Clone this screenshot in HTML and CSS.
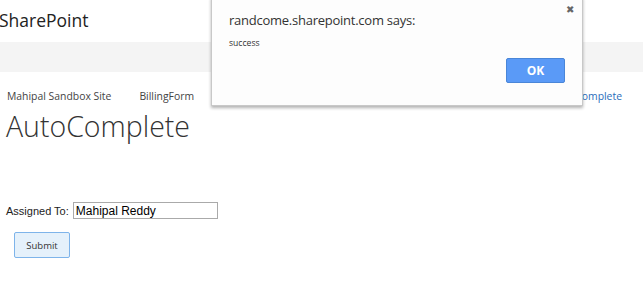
FILE: index.html
```html
<!DOCTYPE html>
<html lang="en">
<head>
    <meta charset="UTF-8">
    <title>AutoComplete</title>
    <link rel="stylesheet" href="styles.css">
</head>
<body>

    <div class="brand-bar">
        <span class="brand">SharePoint</span>
    </div>
    <div class="suite-bar"></div>

    <div class="page">
        <nav class="crumbs">
            <a href="#">Mahipal Sandbox Site</a>
            <a href="#">BillingForm</a>
            <a href="#" class="current">AutoComplete</a>
        </nav>
        <h1 class="page-title">AutoComplete</h1>

        <form class="assign-form">
            <div class="field">
                <label for="assigned">Assigned To:</label>
                <input type="text" id="assigned" value="Mahipal Reddy">
            </div>
            <button type="button" class="submit">Submit</button>
        </form>
    </div>

    <div class="alert-box">
        <span class="close">&#10006;</span>
        <div class="alert-title">randcome.sharepoint.com says:</div>
        <div class="alert-msg">success</div>
        <div class="alert-actions">
            <button type="button" class="ok">OK</button>
        </div>
    </div>

</body>
</html>
```

FILE: styles.css
```css
body {
    margin: 0;
    font-family: 'Open Sans', 'Noto Sans', sans-serif;
    background-color: #fff;
    color: #333;
    width: 643px;
    height: 288px;
    overflow: hidden;
    position: relative;
}
.brand-bar {
    height: 42px;
    display: flex;
    align-items: center;
}
.brand {
    font-size: 17.5px;
    color: #222;
    margin-left: -1px;
    margin-top: -2px;
}
.suite-bar {
    height: 30px;
    background-color: #f4f4f4;
}
.page {
    padding: 0 6px;
}
.crumbs {
    display: flex;
    gap: 28px;
    margin-top: 17px;
    padding-left: 1px;
    font-size: 10.4px;
}
.crumbs a {
    color: #444;
    text-decoration: none;
}
.crumbs a.current {
    color: #2a6ebb;
    margin-left: auto;
    margin-right: 15px;
}
.page-title {
    font-size: 28.5px;
    font-weight: 300;
    color: #333;
    margin: 3px 0 0;
    line-height: 40px;
}
.assign-form {
    margin-top: 56px;
    font-family: 'Liberation Sans', Arial, sans-serif;
    font-size: 11px;
}
.field {
    display: flex;
    align-items: center;
    gap: 4px;
}
.field label {
    color: #222;
}
.field input {
    width: 145px;
    height: 17px;
    box-sizing: border-box;
    border: 1px solid #aaa;
    padding: 0 2px;
    font-family: 'Liberation Sans', Arial, sans-serif;
    font-size: 12px;
    color: #000;
}
.submit {
    margin: 13px 0 0 8px;
    width: 56px;
    height: 26px;
    background-color: #e5f1fb;
    border: 1px solid #7eb4ea;
    border-radius: 2px;
    font-family: 'Open Sans', 'Noto Sans', sans-serif;
    font-size: 9.5px;
    color: #333;
}
.alert-box {
    position: absolute;
    left: 211px;
    top: -4px;
    width: 372px;
    height: 110px;
    box-sizing: border-box;
    background-color: #fdfdfd;
    border: 1px solid #c8c8c8;
    box-shadow: 0 2px 3px rgba(0, 0, 0, 0.3);
    padding: 13px 17px 0;
}
.close {
    position: absolute;
    right: 8px;
    top: 5px;
    font-size: 10px;
    color: #666;
}
.alert-title {
    font-size: 13px;
    letter-spacing: -0.25px;
    color: #333;
    margin-top: 1px;
}
.alert-msg {
    font-size: 8.6px;
    color: #333;
    margin-top: 8px;
}
.alert-actions {
    display: flex;
    justify-content: flex-end;
    margin-top: 9px;
}
.ok {
    width: 59px;
    height: 25px;
    background-color: #5a9af7;
    border: 1px solid #4a86d8;
    border-radius: 2px;
    color: #fff;
    font-weight: bold;
    font-family: 'Open Sans', 'Noto Sans', sans-serif;
    font-size: 12px;
}
```
